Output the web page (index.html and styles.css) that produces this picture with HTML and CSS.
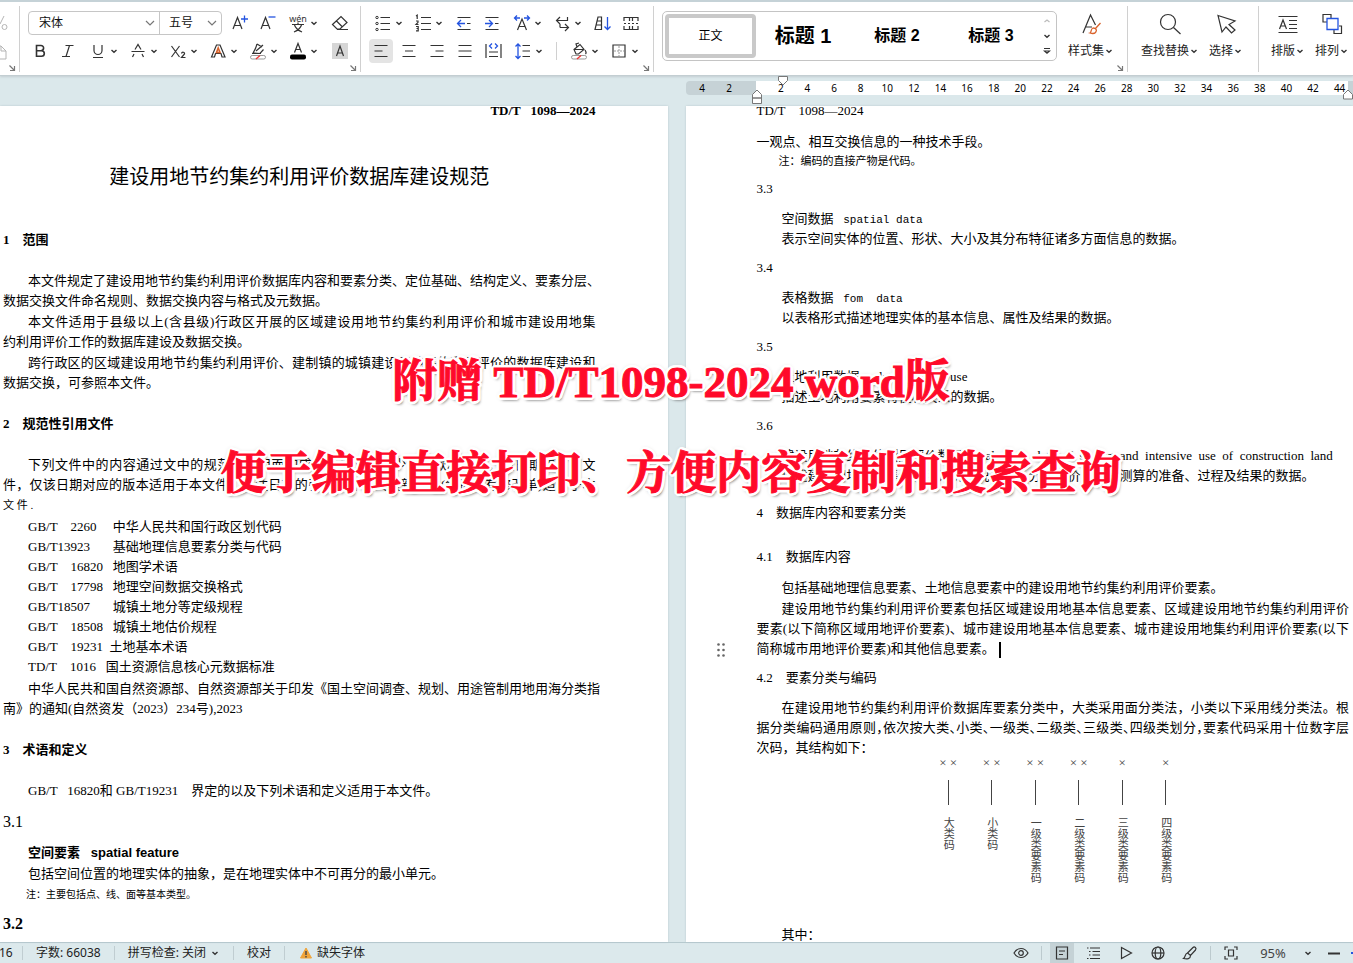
FILE: index.html
```html
<!DOCTYPE html>
<html lang="zh-CN">
<head>
<meta charset="utf-8">
<title>建设用地节约集约利用评价数据库建设规范</title>
<link rel="stylesheet" href="styles.css">
</head>
<body>
<svg class="defs" aria-hidden="true">
  <symbol id="caret" viewBox="0 0 10 10"><path d="M2.5 4 5 6.300 7.500 4" fill="none" stroke="#333" stroke-width="1.400"/></symbol>
  <symbol id="chevron" viewBox="0 0 10 10"><path d="M1 3 5 7 9 3" fill="none" stroke="#777" stroke-width="1.200"/></symbol>
  <symbol id="launch" viewBox="0 0 8 8"><path d="M1.500 1.500 6 6M6.500 2v4.500H2" fill="none" stroke="#777" stroke-width="1.200"/></symbol>
</svg>

<header class="toolbar">
  <div class="group clip">
    <svg class="cut" viewBox="0 0 8 56"><g fill="none" stroke="#b5b5b5"><path d="M0 18 4 10"/><circle cx="4.500" cy="21" r="2.500"/><path d="M0 40h1l5 5v8H0M1 40v5h5"/></g></svg>
    <button class="launcher" aria-label="剪贴板设置"><svg viewBox="0 0 8 8"><use href="#launch"/></svg></button>
  </div>

  <div class="group font">
    <div class="row">
      <div class="combo">
        <label class="pick family"><select aria-label="字体"><option>宋体</option></select><svg viewBox="0 0 10 10"><use href="#chevron"/></svg></label>
        <label class="pick size"><select aria-label="字号"><option>五号</option></select><svg viewBox="0 0 10 10"><use href="#chevron"/></svg></label>
      </div>
      <button class="tool" aria-label="增大字号"><svg viewBox="0 0 22 22"><path d="M4 17 8.500 5.500 13 17M5.500 13.500h6" class="ln"/><path d="M12 7h7M15.500 3.500v7" class="bl"/></svg></button>
      <button class="tool" aria-label="减小字号"><svg viewBox="0 0 22 22"><path d="M4 17 8.500 5.500 13 17M5.500 13.500h6" class="ln"/><path d="M11.500 5h7" class="bl"/></svg></button>
      <button class="tool split" aria-label="拼音指南"><svg viewBox="0 0 22 22"><text x="11" y="10" class="gl" font-size="9">wén</text><path d="M5 12.500h12M11 10.500v2M7.500 13c1 3 4 5.500 7.500 7M14.500 13c-1 3-4 5.500-7.500 7" class="ln"/></svg><svg class="car" viewBox="0 0 10 10"><use href="#caret"/></svg></button>
      <button class="tool wide" aria-label="清除格式"><svg viewBox="0 0 22 22"><path d="M3.500 12.500 12 4.500l6 6-7 6.500H8zM7.500 9l6 6M8 17.500h11" class="ln"/></svg></button>
    </div>
    <div class="row">
      <button class="tool" aria-label="加粗"><svg viewBox="0 0 22 22"><path d="M7.500 5.500h4.500a2.500 2.500 0 0 1 0 5.200H7.500zM7.500 10.700h5a2.800 2.800 0 0 1 0 5.600h-5z" class="ln th"/></svg></button>
      <button class="tool" aria-label="倾斜"><svg viewBox="0 0 22 22"><path d="M8.500 5.500h8M5 16.500h8M12.500 5.500 9 16.500" class="ln"/></svg></button>
      <button class="tool split" aria-label="下划线"><svg viewBox="0 0 22 22"><path d="M7 5v5.500a4 4 0 0 0 8 0V5M6 17.500h10" class="ln"/></svg><svg class="car" viewBox="0 0 10 10"><use href="#caret"/></svg></button>
      <button class="tool split" aria-label="删除线"><svg viewBox="0 0 22 22"><path d="M4.500 11.500h13M8 9.500l3-5 3 5M7 14l-1.500 3M15 14l1.500 3" class="ln"/></svg><svg class="car" viewBox="0 0 10 10"><use href="#caret"/></svg></button>
      <button class="tool split" aria-label="下标"><svg viewBox="0 0 22 22"><path d="M4.500 6l8 11M12.500 6l-8 11M14.500 13.500c.5-2 3.500-1.500 3 .5l-3 3.500h4" class="ln"/></svg><svg class="car" viewBox="0 0 10 10"><use href="#caret"/></svg></button>
      <button class="tool split" aria-label="文字效果"><svg viewBox="0 0 22 22"><path d="M4.500 17 9.500 5h3.500l5 12h-3l-1-3.500H8.500L7.500 17z" class="ln"/><path d="M9.500 12.500 11.200 8l1.800 4.500z" fill="none" stroke="#d9622b" stroke-width="1.600"/></svg><svg class="car" viewBox="0 0 10 10"><use href="#caret"/></svg></button>
      <button class="tool split" aria-label="突出显示"><svg viewBox="0 0 22 22"><path d="M6 13c2-3 3-5 4-9M6 13l7 .5 3.500-4M10 4l5 3M9 11l7-6M5 13.500h9" class="ln"/><rect x="3.500" y="15.500" width="15" height="3.500" rx="1.700" fill="#fff" stroke="#999"/><path d="m9 19 4-3.500" stroke="#e33" stroke-width="1.300"/></svg><svg class="car" viewBox="0 0 10 10"><use href="#caret"/></svg></button>
      <button class="tool split" aria-label="字体颜色"><svg viewBox="0 0 22 22"><path d="M7.500 12.500 11 3.500l3.500 9M8.500 9.500h5" class="ln"/><rect x="3" y="14.500" width="16" height="5" rx="2"/></svg><svg class="car" viewBox="0 0 10 10"><use href="#caret"/></svg></button>
      <button class="tool wide" aria-label="字符底纹"><svg viewBox="0 0 22 22"><path d="M3 3h16v16H3z" fill="#d6d6d6"/><path d="M7.500 16 11 6l3.500 10M8.500 13h5" class="ln"/></svg></button>
    </div>
    <button class="launcher" aria-label="字体设置"><svg viewBox="0 0 8 8"><use href="#launch"/></svg></button>
  </div>

  <div class="group para">
    <div class="row">
      <button class="tool split" aria-label="项目符号"><svg viewBox="0 0 22 22"><path d="M8.500 5.500H18M8.500 11.500H18M8.500 17.500H18" class="ln"/><g fill="none" stroke="#333"><circle cx="5" cy="5.500" r="1.200"/><circle cx="5" cy="11.500" r="1.200"/><circle cx="5" cy="17.500" r="1.200"/></g></svg><svg class="car" viewBox="0 0 10 10"><use href="#caret"/></svg></button>
      <button class="tool split" aria-label="编号"><svg viewBox="0 0 22 22"><path d="M9 5.500h10M9 11.500h10M9 17.500h10" class="ln"/><path d="M4 4l1.200-.8v3.800M4 9h2v1.300L4 12.500h2.500M4 14.500h2.200v4.300H4M4.500 16.500h1.700" class="ln"/></svg><svg class="car" viewBox="0 0 10 10"><use href="#caret"/></svg></button>
      <button class="tool gap" aria-label="减少缩进"><svg viewBox="0 0 22 22"><path d="M4.500 5.500h13M4.500 17.500h13M14 11.500h3.500" class="ln"/><path d="M12 11.500H4.500M8 8l-3.500 3.500L8 15" class="bl"/></svg></button>
      <button class="tool" aria-label="增加缩进"><svg viewBox="0 0 22 22"><path d="M4.500 5.500h13M4.500 17.500h13M14 11.500h3.500" class="ln"/><path d="M4 11.500h7.500M8 8l3.500 3.500L8 15" class="bl"/></svg></button>
      <button class="tool split" aria-label="中文版式"><svg viewBox="0 0 22 22"><path d="M6.500 18 11 7l4.500 11M8 14.500h6" class="ln"/><path d="M3.500 6H9M13 6h5.500M6 3.500 3.500 6 6 8.500M16 3.500 18.500 6 16 8.500" class="bl"/></svg><svg class="car" viewBox="0 0 10 10"><use href="#caret"/></svg></button>
      <button class="tool split" aria-label="制表位"><svg viewBox="0 0 22 22"><path d="M16.500 5v3.500H6M9 5 5.500 8.500 9 12M9 15.500h8.500M14 12l3.500 3.500L14 19M9 12v3.500" class="ln"/></svg><svg class="car" viewBox="0 0 10 10"><use href="#caret"/></svg></button>
      <button class="tool gap" aria-label="排序"><svg viewBox="0 0 22 22"><path d="M3 17.500 6 5h3.500v12.500zM5 9h4.500M4 13h5.500" class="ln"/><path d="M15.500 5v12.500M12.500 14.500l3 3 3-3" class="bl"/></svg></button>
      <button class="tool" aria-label="显示编辑标记"><svg viewBox="0 0 22 22"><path d="M4 9V5.500h5.500V9M9.500 5.500h3V9M12.500 5.500H18V9M4 14v3.500h5.500V14M9.500 17.500h3V14M12.500 17.500H18V14M4 11.500h2M8 11.500h2M12 11.500h2M16 11.500h2" class="ln"/></svg></button>
    </div>
    <div class="row">
      <button class="tool on" aria-label="左对齐"><svg viewBox="0 0 22 22"><path d="M4.500 5.500h13M4.500 11h8M4.500 16.500h13" class="ln"/></svg></button>
      <button class="tool" aria-label="居中"><svg viewBox="0 0 22 22"><path d="M4.500 5.500h13M7 11h8M4.500 16.500h13" class="ln"/></svg></button>
      <button class="tool" aria-label="右对齐"><svg viewBox="0 0 22 22"><path d="M4.500 5.500h13M9.500 11h8M4.500 16.500h13" class="ln"/></svg></button>
      <button class="tool" aria-label="两端对齐"><svg viewBox="0 0 22 22"><path d="M4.500 5.500h13M4.500 11h13M4.500 16.500h13" class="ln"/></svg></button>
      <button class="tool" aria-label="分散对齐"><svg viewBox="0 0 22 22"><path d="M4 4v14M19 4v14M7 12h9M7 16.500h9" class="ln"/><path d="M10 3.500 7.500 6l2.500 2.500M13 3.500 15.500 6 13 8.500" class="bl"/></svg></button>
      <button class="tool split" aria-label="行距"><svg viewBox="0 0 22 22"><path d="M10.500 5.500H18M10.500 11H18M10.500 16.500H18" class="ln"/><path d="M6 4v14.500M3.500 6.500 6 4l2.500 2.500M3.500 16 6 18.500 8.500 16" class="bl"/></svg><svg class="car" viewBox="0 0 10 10"><use href="#caret"/></svg></button>
      <span class="bar"></span>
      <button class="tool split" aria-label="底纹颜色"><svg viewBox="0 0 22 22"><path d="M6 9.500l6-5 4 5-5.500 4.500H8zM6 9.500h10M9 7l-1-3 3-1M17 10c1.500 2 1.500 3 .5 4" class="ln"/><rect x="3.500" y="15.500" width="15" height="3.500" rx="1.700" fill="#fff" stroke="#999"/><path d="m9 19 4-3.500" stroke="#e33" stroke-width="1.300"/></svg><svg class="car" viewBox="0 0 10 10"><use href="#caret"/></svg></button>
      <button class="tool split" aria-label="边框"><svg viewBox="0 0 22 22"><path d="M5 5h12v12H5z" class="ln"/><path d="M11 6v10M6 11h10" stroke="#999" stroke-dasharray="2 1"/></svg><svg class="car" viewBox="0 0 10 10"><use href="#caret"/></svg></button>
    </div>
    <button class="launcher" aria-label="段落设置"><svg viewBox="0 0 8 8"><use href="#launch"/></svg></button>
  </div>

  <div class="group styles">
    <div class="gallery">
      <button class="style current">正文</button>
      <button class="style h1">标题 1</button>
      <button class="style h2">标题 2</button>
      <button class="style h3">标题 3</button>
      <div class="scroll">
        <button aria-label="上一行"><svg viewBox="0 0 10 10"><path d="M2.500 6 5 4l2.500 2" fill="none" stroke="#bbb" stroke-width="1.200"/></svg></button>
        <button aria-label="下一行"><svg viewBox="0 0 10 10"><use href="#caret"/></svg></button>
        <button aria-label="更多样式"><svg viewBox="0 0 10 10"><path d="M2 2.500h6M2.500 5 5 7.300 7.500 5z" fill="none" stroke="#333" stroke-width="1.200"/></svg></button>
      </div>
    </div>
    <button class="big"><svg class="pic" viewBox="0 0 24 24"><path d="M4 21 11.500 3l5 10M6.500 15H13" class="ln"/><path d="M21.500 11 16 17M14 16c3 0 4.500 2 2.500 4.500-1.500 1.500-4 1-5.500.5 1.500-.5.500-4 3-5z" fill="none" stroke="#d9622b" stroke-width="1.300"/></svg><span>样式集<svg class="car" viewBox="0 0 10 10"><use href="#caret"/></svg></span></button>
    <button class="launcher" aria-label="样式设置"><svg viewBox="0 0 8 8"><use href="#launch"/></svg></button>
  </div>

  <div class="group edit">
    <button class="big"><svg class="pic" viewBox="0 0 24 24"><circle cx="10" cy="10" r="7.500" class="ln"/><path d="m15.500 15.500 7 6.500" class="ln"/></svg><span>查找替换<svg class="car" viewBox="0 0 10 10"><use href="#caret"/></svg></span></button>
    <button class="big"><svg class="pic" viewBox="0 0 24 24"><path d="M4 3.500 21 9l-6 3.500 6 5.500-3.500 3-5.500-6-4 5z" class="ln"/></svg><span>选择<svg class="car" viewBox="0 0 10 10"><use href="#caret"/></svg></span></button>
  </div>

  <div class="group layout">
    <button class="big"><svg class="pic" viewBox="0 0 24 24"><path d="M2.500 4.500h19M2.500 20.500h19M3.500 17 7 8l3.500 9M5 14h4M13 8.500h8M13 12.500h8M13 16.500h8" class="ln"/></svg><span>排版<svg class="car" viewBox="0 0 10 10"><use href="#caret"/></svg></span></button>
    <button class="big"><svg class="pic" viewBox="0 0 24 24"><path d="M7 10H3V2.500h8V6M14 18v3.500h7.500V14H19" class="ln"/><path d="M7 6.500h11v11H7z" class="bl"/></svg><span>排列<svg class="car" viewBox="0 0 10 10"><use href="#caret"/></svg></span></button>
  </div>
</header>

<main class="work">
  <div class="rulers">
    <div class="ruler">
      <div class="margin"><span>4</span><span>2</span></div>
      <div class="scale"><span>2</span><span>4</span><span>6</span><span>8</span><span>10</span><span>12</span><span>14</span><span>16</span><span>18</span><span>20</span><span>22</span><span>24</span><span>26</span><span>28</span><span>30</span><span>32</span><span>34</span><span>36</span><span>38</span><span>40</span><span>42</span><span>44</span></div>
      <svg class="mark first" viewBox="0 0 12 12"><path d="M1.500 1.500h9v4L6 10 1.500 5.500z"/></svg>
      <svg class="mark left" viewBox="0 0 12 16"><path d="M1.500 9V5.500L6 1l4.500 4.500V9zM1.500 9h9v5.500h-9z"/></svg>
      <svg class="mark right" viewBox="0 0 12 12"><path d="M1.500 10V5.500L6 1l4.500 4.500V10z"/></svg>
    </div>
  </div>

  <div class="pages">
    <article class="page one">
      <p class="running">TD/T&nbsp;&nbsp; 1098—2024</p>
      <h1>建设用地节约集约利用评价数据库建设规范</h1>
      <h2>1&emsp;范围</h2>
      <p><span class="l in full">本文件规定了建设用地节约集约利用评价数据库内容和要素分类、定位基础、结构定义、要素分层、</span><span class="l">数据交换文件命名规则、数据交换内容与格式及元数据。</span></p>
      <p><span class="l in full">本文件适用于县级以上(含县级)行政区开展的区域建设用地节约集约利用评价和城市建设用地集</span><span class="l">约利用评价工作的数据库建设及数据交换。</span></p>
      <p><span class="l in full">跨行政区的区域建设用地节约集约利用评价、建制镇的城镇建设用地集约利用评价的数据库建设和</span><span class="l">数据交换，可参照本文件。</span></p>
      <h2>2&emsp;规范性引用文件</h2>
      <p><span class="l in full">下列文件中的内容通过文中的规范性引用而构成本文件必不可少的条款。其中，注日期的引用文</span><span class="l full">件，仅该日期对应的版本适用于本文件；不注日期的引用文件，其最新版本(包括所有修改单)适用于本</span><span class="l small">文 件 .</span></p>
      <ul class="refs">
        <li>GB/T&nbsp;&nbsp;&nbsp; 2260&emsp;&nbsp;中华人民共和国行政区划代码</li>
        <li>GB/T13923&emsp;&nbsp;&nbsp;&nbsp;基础地理信息要素分类与代码</li>
        <li>GB/T&nbsp;&nbsp;&nbsp; 16820&nbsp;&nbsp; 地图学术语</li>
        <li>GB/T&nbsp;&nbsp;&nbsp; 17798&nbsp;&nbsp; 地理空间数据交换格式</li>
        <li>GB/T18507&emsp;&nbsp;&nbsp;&nbsp;城镇土地分等定级规程</li>
        <li>GB/T&nbsp;&nbsp;&nbsp; 18508&nbsp;&nbsp; 城镇土地估价规程</li>
        <li>GB/T&nbsp;&nbsp;&nbsp; 19231&nbsp; 土地基本术语</li>
        <li>TD/T&nbsp;&nbsp;&nbsp; 1016&nbsp;&nbsp; 国土资源信息核心元数据标准</li>
      </ul>
      <p><span class="l in">中华人民共和国自然资源部、自然资源部关于印发《国土空间调查、规划、用途管制用地用海分类指</span><span class="l">南》的通知(自然资发（2023）234号),2023</span></p>
      <h2>3&emsp;术语和定义</h2>
      <p class="lead"><span class="l in">GB/T&nbsp;&nbsp; 16820和 GB/T19231&nbsp;&nbsp;&nbsp; 界定的以及下列术语和定义适用于本文件。</span></p>
      <h3 class="num">3.1</h3>
      <p class="term">空间要素&nbsp;&nbsp; spatial feature</p>
      <p class="def"><span class="l in">包括空间位置的地理实体的抽象，是在地理实体中不可再分的最小单元。</span></p>
      <p class="tiny">注：主要包括点、线、面等基本类型。</p>
      <h3 class="num strong">3.2</h3>
    </article>

    <article class="page two">
      <p class="running">TD/T&nbsp;&nbsp;&nbsp; 1098—2024</p>
      <p class="cont">一观点、相互交换信息的一种技术手段。</p>
      <p class="note">注：编码的直接产物是代码。</p>
      <h3>3.3</h3>
      <p><span class="l in">空间数据&nbsp;&nbsp; <span class="mono">spatial data</span></span></p>
      <p><span class="l in">表示空间实体的位置、形状、大小及其分布特征诸多方面信息的数据。</span></p>
      <h3>3.4</h3>
      <p><span class="l in">表格数据&nbsp;&nbsp; <span class="mono">fom&nbsp; data</span></span></p>
      <p><span class="l in">以表格形式描述地理实体的基本信息、属性及结果的数据。</span></p>
      <h3>3.5</h3>
      <p><span class="l in">土地利用数据&nbsp;&nbsp;&nbsp;&nbsp; data&nbsp; of&nbsp; land&nbsp; use</span></p>
      <p><span class="l in">描述土地利用要素特征和关系的数据。</span></p>
      <h3>3.6</h3>
      <p><span class="l in">建设用地节约集约利用评价数据&nbsp;&nbsp; evaluation&nbsp; data&nbsp; of&nbsp; saving&nbsp; and&nbsp; intensive&nbsp; use&nbsp; of&nbsp; construction&nbsp; land</span><span class="l in">描述建设用地节约集约利用评价状况调查、分析评价、潜力测算的准备、过程及结果的数据。</span></p>
      <h2 class="plain">4&emsp;数据库内容和要素分类</h2>
      <h3 class="sub">4.1&nbsp;&nbsp;&nbsp; 数据库内容</h3>
      <p><span class="l in">包括基础地理信息要素、土地信息要素中的建设用地节约集约利用评价要素。</span></p>
      <p class="active"><span class="l in full">建设用地节约集约利用评价要素包括区域建设用地基本信息要素、区域建设用地节约集约利用评价</span><span class="l full">要素(以下简称区域用地评价要素)、城市建设用地基本信息要素、城市建设用地集约利用评价要素(以下</span><span class="l">简称城市用地评价要素)和其他信息要素。<i class="cursor"></i></span><svg class="handle" viewBox="0 0 8 14"><g fill="#666"><circle cx="1.500" cy="1.500" r="1.300"/><circle cx="6.500" cy="1.500" r="1.300"/><circle cx="1.500" cy="7" r="1.300"/><circle cx="6.500" cy="7" r="1.300"/><circle cx="1.500" cy="12.500" r="1.300"/><circle cx="6.500" cy="12.500" r="1.300"/></g></svg></p>
      <h3>4.2&nbsp;&nbsp;&nbsp; 要素分类与编码</h3>
      <p><span class="l in full">在建设用地节约集约利用评价数据库要素分类中，大类采用面分类法，小类以下采用线分类法。根</span><span class="l full tight">据分类编码通用原则，依次按大类、小类、一级类、二级类、三级类、四级类划分，要素代码采用十位数字层</span><span class="l">次码，其结构如下：</span></p>
      <div class="codes">
        <div class="code"><b>× ×</b><i></i><span>大类码</span></div>
        <div class="code"><b>× ×</b><i></i><span>小类码</span></div>
        <div class="code"><b>× ×</b><i></i><span>一级类要素码</span></div>
        <div class="code"><b>× ×</b><i></i><span>二级类要素码</span></div>
        <div class="code"><b>×</b><i></i><span>三级类要素码</span></div>
        <div class="code"><b>×</b><i></i><span>四级类要素码</span></div>
      </div>
      <p class="where"><span class="l in">其中：</span></p>
    </article>
  </div>

  <div class="banner">
    <p>附赠 TD/T1098-2024 word版</p>
    <p>便于编辑直接打印、方便内容复制和搜索查询</p>
  </div>
</main>

<footer class="status">
  <span class="cell pageno">16</span>
  <span class="cell">字数: 66038</span>
  <button class="cell">拼写检查: 关闭<svg class="car" viewBox="0 0 10 10"><use href="#caret"/></svg></button>
  <button class="cell">校对</button>
  <button class="cell warn"><svg viewBox="0 0 14 14"><path d="M7 2 12.500 12H1.500z" fill="#f0a43a" stroke="#f0a43a" stroke-linejoin="round"/><path d="M7 5v4M7 10v1.500" stroke="#444" stroke-width="1.400"/></svg>缺失字体</button>
  <div class="views">
    <button aria-label="护眼模式"><svg viewBox="0 0 16 16"><path d="M1 8c3.500-6 10.500-6 14 0-3.500 6-10.500 6-14 0z" class="ln"/><circle cx="8" cy="8" r="2.300" class="ln"/></svg></button>
    <span class="bar"></span>
    <button class="on" aria-label="页面视图"><svg viewBox="0 0 16 16"><path d="M2.500 2h11v12h-11zM5 6h6M5 9.500h4" class="ln"/></svg></button>
    <button aria-label="大纲"><svg viewBox="0 0 16 16"><path d="M4 3h10M6.500 6.500H14M6.500 10H14M4 13.500h10M1 3h1.500M3 6.500h1.500M3 10h1.500M1 13.500h1.500" class="ln"/></svg></button>
    <button aria-label="阅读"><svg viewBox="0 0 16 16"><path d="M3.500 2.500 13.500 8l-10 5.500z" class="ln"/></svg></button>
    <button aria-label="Web 版式"><svg viewBox="0 0 16 16"><g class="ln"><circle cx="8" cy="8" r="6"/><ellipse cx="8" cy="8" rx="2.800" ry="6"/><path d="M2 8h12"/></g></svg></button>
    <button aria-label="写作模式"><svg viewBox="0 0 16 16"><path d="M5.500 8 11 2.500c1.500-1.500 4 .5 2.500 2.500L8.500 10.500zM5.500 8C2.500 8.500 4 12 1.500 13.500c3.500 1 7 .5 7-3" class="ln"/></svg></button>
    <span class="bar"></span>
    <button class="fit" aria-label="最佳缩放"><svg viewBox="0 0 16 16"><path d="M2 5V2h3M11 2h3v3M14 11v3h-3M5 14H2v-3M5.500 5h5v6h-5z" class="ln"/></svg></button>
    <button class="zoom">95%</button>
    <button class="drop" aria-label="缩放选项"><svg class="car" viewBox="0 0 10 10"><use href="#caret"/></svg></button>
    <button class="minus" aria-label="缩小"><svg viewBox="0 0 16 16"><path d="M2 8.500h12" stroke="#333" stroke-width="2"/></svg></button>
    <span class="track"></span>
  </div>
</footer>
</body>
</html>
```
FILE: styles.css
```css
* { box-sizing: border-box; }
body {
  margin: 0;
  height: 100vh;
  display: flex;
  flex-direction: column;
  overflow: hidden;
  background: #dbe8eb;
  color: #000;
  font: 12px/20px "Noto Sans", "Noto Sans CJK SC", sans-serif;
}
p, h1, h2, h3, ul { margin: 0; padding: 0; }
button {
  margin: 0;
  padding: 0;
  border: 0;
  background: none;
  color: #222;
  font: inherit;
  white-space: nowrap;
}
svg { display: block; flex: none; }
.defs { position: absolute; width: 0; height: 0; }
.ln { fill: none; stroke: #333; stroke-width: 1.2; }
.th { stroke-width: 1.6; }
.bl { fill: none; stroke: #2454e0; stroke-width: 1.3; }
.gl { text-anchor: middle; fill: #333; }
.car { width: 10px; height: 10px; }

/* toolbar */
.toolbar {
  flex: none;
  display: flex;
  height: 76px;
  padding: 4px 0;
  background: #fff;
  border-top: 2px solid #c5d2d7;
  border-bottom: 1px solid #c3ced2;
  box-shadow: 0 1px 2px #c3ced2;
  overflow: hidden;
}
.group {
  position: relative;
  flex: none;
  height: 66px;
  border-left: 1px solid #d0d0d0;
}
.group.clip { width: 19px; border: 0; }
.cut { width: 8px; height: 56px; }
.font { width: 341px; padding: 3px 0 0 6px; }
.para { width: 293px; padding: 3px 0 0 6px; }
.styles { width: 474px; display: flex; padding-left: 8px; }
.edit { width: 131px; display: flex; padding-left: 8px; }
.layout { display: flex; padding-left: 7px; }
.row { display: flex; align-items: center; height: 28px; }
.tool {
  flex: none;
  width: 28px;
  height: 24px;
  display: flex;
  align-items: center;
  justify-content: center;
  border-radius: 4px;
}
.tool svg { width: 22px; height: 22px; }
.tool.split { width: 40px; padding-left: 2px; }
.tool .car { width: 10px; height: 10px; }
.tool.wide { width: 36px; }
.tool.gap { margin-left: 3px; }
.tool.on { background: #e4e4e4; width: 24px; margin: 0 2px; }
.row .bar { width: 1px; height: 18px; margin: 0 6px 0 9px; background: #d0d0d0; }
.launcher { position: absolute; right: 3px; bottom: 0; }
.launcher svg { width: 8px; height: 8px; }
.combo {
  display: flex;
  width: 194px;
  height: 24px;
  margin: 0 4px 0 2px;
  border: 1px solid #c6c6c6;
  border-radius: 4px;
}
.pick { display: flex; align-items: center; padding-right: 4px; }
.pick.family { width: 131px; border-right: 1px solid #c6c6c6; }
.pick.size { flex: 1; }
.pick svg { width: 10px; height: 10px; }
.pick select {
  flex: 1;
  min-width: 0;
  appearance: none;
  border: 0;
  padding: 0 0 0 10px;
  background: none;
  color: #111;
  font: inherit;
}
.pick.size select { padding-left: 9px; }

.gallery {
  display: grid;
  grid-template-columns: 93px 94px 94px 94px 17px;
  width: 395px;
  height: 50px;
  margin-top: 5px;
  padding: 2px 0;
  border: 1px solid #c4c4c4;
  border-radius: 5px;
}
.style { color: #000; font-weight: 700; font-family: "Liberation Sans", "Noto Sans CJK SC", sans-serif; }
.style.current { margin-left: 2px; border: 4px solid #c9c9c9; border-radius: 4px; font-weight: 400; }
.style.h1 { font-size: 20px; }
.style.h2 { font-size: 16px; }
.style.h3 { font-size: 16px; }
.scroll { display: flex; flex-direction: column; align-items: center; justify-content: space-around; }
.scroll svg { width: 10px; height: 10px; }
.big { display: flex; flex-direction: column; align-items: center; padding: 6px 5px 0; }
.pic { width: 24px; height: 24px; }
.big span { display: flex; align-items: center; height: 30px; }
.styles .big { margin-left: 6px; }

/* workspace */
.work { position: relative; flex: 1; min-height: 0; display: flex; flex-direction: column; }
.rulers { flex: none; display: grid; grid-template-columns: 1fr 1fr; gap: 18px; height: 30px; padding-top: 5px; }
.ruler {
  grid-column: 2;
  position: relative;
  display: flex;
  height: 14px;
  font-size: 10px;
  line-height: 14px;
  text-align: center;
}
.ruler .margin { display: flex; width: 70px; padding-left: 3px; background: #c6d2d6; border-radius: 4px 0 0 4px; }
.ruler .margin span { width: 27px; }
.scale {
  flex: 1;
  display: flex;
  padding-left: 12px;
  background: linear-gradient(#fff, #fff) 0 0 / calc(100% - 5px) 100% no-repeat #c6d2d6;
}
.scale span { flex: 1 1 0; }
.mark { position: absolute; width: 12px; fill: #fff; stroke: #777; }
.mark.first { left: 91px; top: -6px; height: 12px; }
.mark.left { left: 65px; top: 8px; height: 16px; }
.mark.right { right: -1px; top: 8px; height: 12px; }

.pages { flex: 1; min-height: 0; display: grid; grid-template-columns: 1fr 1fr; gap: 18px; }
.page {
  min-width: 0;
  overflow: hidden;
  background: #fff;
  box-shadow: 0 0 2px #b9c8cd;
  font: 13px/20px "Liberation Serif", "Noto Sans CJK SC", serif;
  white-space: nowrap;
}
.page.one { padding: 0 72px 0 3px; }
.page.two { padding: 0 4px 0 71px; }
.l { display: block; }
.in { padding-left: 25px; }
.full { text-align: justify; text-align-last: justify; white-space: nowrap; }
.tight { font-feature-settings: "halt"; }
.mono { font-family: "Liberation Mono", monospace; font-size: 11px; line-height: 1; }
.small { font-size: 11px; }
.running { line-height: 10px; }
.one .running { text-align: right; font-weight: 700; }
h1 { margin: 46px 0 38px; font-size: 20px; line-height: 30px; font-weight: 400; text-align: center; }
h2 { margin: 21px 0; font-size: 13px; }
.one p + p { margin-top: 1px; }
.refs { margin: 2px 0; padding-left: 25px; list-style: none; }
.num { font-size: 16px; font-weight: 400; margin: 11px 0; }
.num.strong { margin: 9px 0; font-weight: 700; }
.term { padding-left: 25px; font-family: "Liberation Sans", "Noto Sans CJK SC", sans-serif; font-weight: 700; }
.tiny { padding-left: 23px; font-size: 10px; }
.cont { margin-top: 16px; }
.note { padding-left: 22px; font-size: 11px; line-height: 18px; }
.two h3 { margin: 9px 0 10px; font-size: 13px; font-weight: 400; }
.two h2.plain { margin: 17px 0 24px; font-weight: 400; }
.two h3.sub { margin-bottom: 11px; }
.active { position: relative; margin-top: 1px; }
.cursor { display: inline-block; width: 2px; height: 16px; margin-left: 4px; background: #000; vertical-align: middle; }
.handle { position: absolute; left: -40px; bottom: 2px; width: 8px; height: 14px; }
.codes {
  display: grid;
  grid-template-columns: repeat(6, 1fr);
  width: 261px;
  margin-left: 170px;
  color: #444;
}
.code { display: flex; flex-direction: column; align-items: center; }
.code b { font-weight: 400; line-height: 10px; }
.code i { width: 1px; height: 25px; margin: 12px 0; background: #444; }
.code span { writing-mode: vertical-rl; font-size: 11px; line-height: 14px; }
.where { margin-top: 42px; }

.banner {
  position: absolute;
  top: 282px;
  left: 0;
  right: 11px;
  text-align: center;
  color: #ff0a2a;
  font: 700 45px/48px "Liberation Serif", "Noto Serif CJK SC", "Noto Sans CJK SC", serif;
  white-space: nowrap;
  -webkit-text-stroke: 1px #ff0a2a;
  text-shadow:
    3px 0 #fff, -3px 0 #fff, 0 3px #fff, 0 -3px #fff,
    2px 2px #fff, -2px 2px #fff, 2px -2px #fff, -2px -2px #fff,
    3px 1px #fff, -3px 1px #fff, 3px -1px #fff, -3px -1px #fff,
    1px 3px #fff, -1px 3px #fff, 1px -3px #fff, -1px -3px #fff,
    2px 3px 3px #555, 0 0 5px #999;
}
.banner p + p { margin-top: 44px; }

/* status bar */
.status {
  flex: none;
  display: flex;
  align-items: center;
  height: 21px;
  border-top: 1px solid #b6c9ce;
  background: #dce9ec;
  color: #222;
}
.cell { display: flex; align-items: center; padding: 0 13px; height: 14px; border-left: 1px solid #c0cdd1; }
.cell.pageno { width: 23px; padding: 0; border: 0; margin-left: -1px; }
.cell .car { margin-left: 4px; }
.warn { gap: 4px; padding-left: 14px; }
.warn svg { width: 14px; height: 14px; }
.views { display: flex; align-items: center; margin-left: auto; height: 20px; }
.views button { width: 32px; height: 20px; display: flex; align-items: center; justify-content: center; }
.views svg { width: 16px; height: 16px; }
.views .car { width: 10px; height: 10px; }
.views .bar { width: 1px; height: 14px; margin: 0 4px; background: #bccace; }
.views .on { width: 24px; margin: 0 4px; background: #c5d2d6; }
.views .zoom { width: 52px; font-size: 13px; color: #444; }
.views .drop { width: 18px; }
.views .minus { width: 34px; }
.track { width: 2px; height: 2px; background: #2454e0; }
```
